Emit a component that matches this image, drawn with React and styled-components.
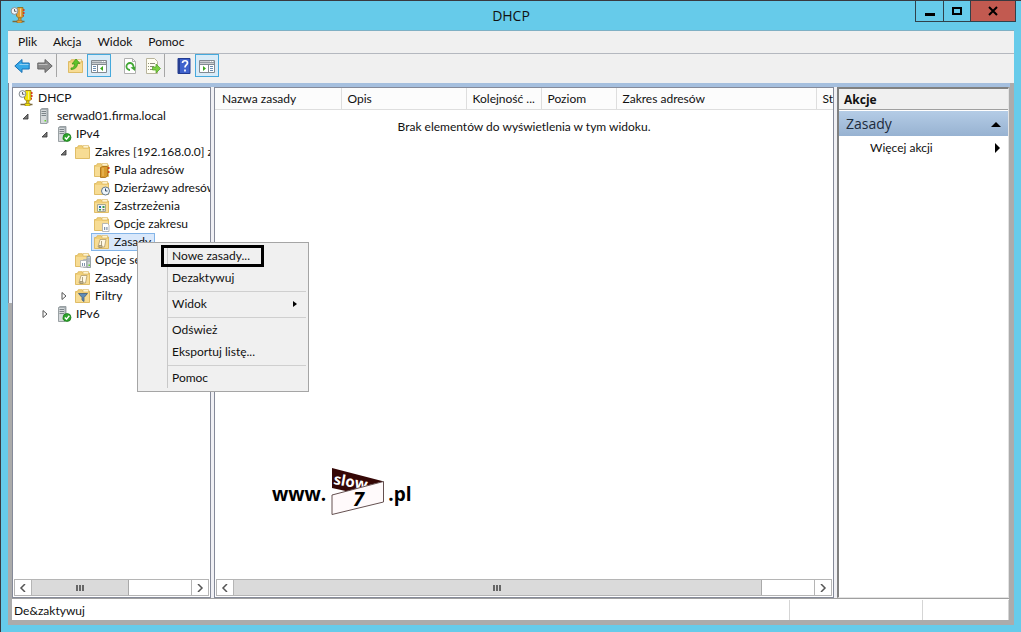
import React from 'react'
import styled, { createGlobalStyle, css } from 'styled-components'

const GlobalStyle = createGlobalStyle`
  * {
    box-sizing: border-box;
  }

  body {
    margin: 0;
    font-family: Lato, "Open Sans", sans-serif;
    font-size: 12px;
    line-height: 18px;
    color: #111;
  }

  button {
    margin: 0;
    padding: 0;
    border: 0;
    background: none;
    font: inherit;
    color: inherit;
    text-align: left;
  }

  svg {
    display: block;
    flex: none;
  }
`

const Window = styled.div`
  display: flex;
  flex-direction: column;
  height: 100vh;
  padding: 0 7px 7px;
  background: #66cbea;
  border: 1px solid #39393f;
  border-width: 1px 0 0 1px;
`

const TitleBar = styled.header`
  display: grid;
  grid-template-columns: 1fr auto 1fr;
  height: 29px;
  flex: none;
`

const TitleIcon = styled.div`
  padding: 6px 2px;
`

const Title = styled.h1`
  margin: 0;
  font-family: "Open Sans", sans-serif;
  font-size: 14px;
  font-weight: 400;
  line-height: 30px;
`

const WindowButtons = styled.div`
  display: flex;
  justify-self: end;
  margin-right: -2px;
  height: 21px;
  border: 1px solid #30414a;
  border-top: 0;
`

const WindowButton = styled.button`
  display: grid;
  place-items: center;
  width: ${({ $wide }) => ($wide ? 45 : 27)}px;
  background: ${({ $danger }) => ($danger ? '#c25a50' : 'transparent')};

  & + & {
    border-left: 1px solid #30414a;
  }
`

const Client = styled.div`
  display: flex;
  flex-direction: column;
  flex: 1;
  min-height: 0;
  background: #f0f0f0;
  border-top: 1px solid #7fb0c4;
`

const MenuBar = styled.nav`
  display: flex;
  height: 23px;
  flex: none;
  padding-left: 2px;
  border-bottom: 1px solid #b4b8bf;
`

const MenuBarItem = styled.button`
  padding: 0 8px;
`

const Toolbar = styled.div`
  display: flex;
  align-items: center;
  height: 29px;
  flex: none;
  padding: 0 2px 6px;
`

const ToolGroup = styled.div`
  display: flex;
  margin-right: 7px;
  border-right: ${({ $divided }) => ($divided ? '1px solid #a6a6a6' : '0')};
`

const ToolButton = styled.button`
  display: grid;
  place-items: center;
  width: ${({ $pressed }) => ($pressed ? 24 : 23)}px;
  height: 23px;
  ${({ $pressed }) => $pressed && css`
    background: #d8ebf8;
    border: 1px solid #45a9dc;
  `}
`

const Body = styled.div`
  display: flex;
  flex-direction: column;
  flex: 1;
  min-height: 0;
  padding: 4px 5px 5px 4px;
  background:
    linear-gradient(90deg, #7d8494 0 1px, #eef3fb 1px 4px) 0 0 / 4px 220px no-repeat,
    linear-gradient(#a5bfde, #a5bfde) 0 0 / calc(100% - 4px) 4px no-repeat,
    #ababab;
`

const Panes = styled.div`
  display: flex;
  flex: 1;
  min-height: 0;
  gap: 3px;
  background: #f0f0f4;
`

const Pane = styled.section`
  display: flex;
  flex-direction: column;
  min-width: 0;
  overflow: hidden;
  background: #fff;
  border: 1px solid #858a99;
`

const TreePane = styled(Pane)`
  width: 199px;
  flex: none;
`

const ListPane = styled(Pane)`
  flex: 1;
`

const ActionsPane = styled(Pane)`
  width: 172px;
  flex: none;
  border: 2px solid #808080;
  border-right: 1px solid #e3e3e3;
  border-bottom: 1px solid #e3e3e3;
`

const Tree = styled.ul`
  flex: 1;
  margin: 0;
  padding: 1px 0 0;
  list-style: none;
  overflow: hidden;
`

const TreeRow = styled.li`
  display: flex;
  align-items: center;
  height: 18px;
  padding-left: ${({ $level }) => ($level ? $level * 19 - 12 : 2)}px;
  white-space: nowrap;
`

const Expander = styled.span`
  display: grid;
  place-items: center;
  flex: none;
  width: 10px;
  height: 18px;
  margin-right: 4px;
`

const TreeLabel = styled.button`
  display: flex;
  align-items: center;
  flex: none;
  gap: 4px;
  height: 18px;
  padding: 0 3px 0 2px;
  line-height: 16px;
  border: 1px solid ${({ $selected }) => ($selected ? '#84b5e8' : 'transparent')};
  background: ${({ $selected }) => ($selected ? '#d9e8fb' : 'none')};
`

const ScrollBar = styled.div`
  display: flex;
  flex: none;
  height: 17px;
  margin: 0 1px 1px;
  border: 1px solid #b5b5b5;
`

const ScrollArrow = styled.button`
  display: grid;
  place-items: center;
  width: 16px;
`

const ScrollTrack = styled.div`
  flex: 1;
  border: 1px solid #b5b5b5;
  border-width: 0 1px;
`

const ScrollThumb = styled.div`
  display: grid;
  place-items: center;
  width: ${({ $size }) => $size}%;
  height: 15px;
  background: #dadada;
  border-right: 1px solid #a9a9a9;
`

const ListTable = styled.table`
  width: 100%;
  table-layout: fixed;
  border-collapse: collapse;
`

const ColumnHead = styled.th`
  width: ${({ $width }) => ($width ? `${$width}px` : 'auto')};
  height: 21px;
  padding: 1px 0 0 6px;
  overflow: hidden;
  font-weight: 400;
  text-align: left;
  white-space: nowrap;
  background: #fcfcfc;
  border: 1px solid #dedede;
  border-width: 0 1px 1px 0;

  &:first-child {
    padding-left: 7px;
  }

  &:last-child {
    border-right: 0;
  }
`

const EmptyCell = styled.td`
  padding: 8px 0 0;
  text-align: center;
`

const ListArea = styled.div`
  display: flex;
  flex-direction: column;
  justify-content: space-between;
  flex: 1;
  min-height: 0;
`

const Watermark = styled.div`
  display: flex;
  align-items: flex-end;
  gap: 4px;
  padding: 0 0 62px 57px;
  font-family: "Open Sans", sans-serif;
  font-size: 19px;
  font-weight: 700;
  line-height: 46px;
  color: #000;
`

const ActionsTitle = styled.h2`
  margin: 0 0 1px;
  padding: 1px 5px 0;
  font-family: "Open Sans", sans-serif;
  font-size: 12px;
  line-height: 19px;
  background: #f0f0f0;
  border-bottom: 1px solid #a0a0a0;
`

const ActionsGroup = styled.button`
  display: flex;
  align-items: center;
  justify-content: space-between;
  height: 25px;
  padding: 0 7px;
  font-family: "Open Sans", sans-serif;
  font-size: 14px;
  color: #1c2b3c;
  background: linear-gradient(#b4cce6, #97b2d1);
`

const ActionsItem = styled.button`
  display: flex;
  align-items: center;
  justify-content: space-between;
  height: 24px;
  padding: 0 6px 0 31px;
`

const StatusBar = styled.footer`
  display: flex;
  flex: none;
  height: 22px;
  background: #fff;
  border-top: 1px solid #a0a0a0;
`

const StatusText = styled.div`
  flex: 1;
  padding: 3px 2px 0;
`

const StatusCell = styled.div`
  width: ${({ $width }) => $width}px;
  margin-top: 1px;
  border-left: 1px solid #d5d5d5;

  &:last-child {
    border-right: 1px solid #d5d5d5;
  }
`

const ContextMenu = styled.div`
  position: absolute;
  top: 242px;
  left: 137px;
  width: 172px;
  padding: 2px;
  background: linear-gradient(#c8c8c8, #c8c8c8) 29px 3px / 1px calc(100% - 6px) no-repeat, #f0f0f0;
  border: 1px solid #a5a5a5;
`

const ContextItem = styled.button`
  display: flex;
  align-items: center;
  justify-content: space-between;
  width: 100%;
  height: 22px;
  padding: 0 7px 0 32px;
`

const ContextRule = styled.hr`
  height: 1px;
  margin: 2px 0 1px 28px;
  border: 0;
  background: #cfcfcf;
`

const Highlight = styled.div`
  position: absolute;
  top: 2px;
  left: 23px;
  width: 103px;
  height: 22px;
  border: 3px solid #000;
  pointer-events: none;
`

const Icon = ({ size = 16, children }) => (
  <svg width={size} height={size} viewBox={`0 0 ${size} ${size}`} aria-hidden="true">
    {children}
  </svg>
)

const DhcpIcon = ({ color = '#f2e205' }) => (
  <Icon>
    <path d="M6.500 1.500 8 .5h5v9l-1.500 1.500h-3l-2-2z" fill={color} stroke="#8a6b14" strokeWidth=".8" />
    <path d="M10.500 1.500v8" stroke="#fff" opacity=".5" />
    <path d="M13 2h1.500v2H13zM13 5h1.500v2H13zM13 8h1v1.500h-1z" fill="#d9391e" />
    <path d="M8.500 11h2.500v3H8.500z" fill={color} stroke="#8a6b14" strokeWidth=".6" />
    <path d="M2.500 14.500h12" stroke="#7d6a3a" strokeWidth="1.500" />
    <path d="M7 13.300h5V16H7z" fill={color} stroke="#7d6a3a" strokeWidth=".6" />
    <circle cx="4.500" cy="4" r="3.400" fill="#f2f5f8" stroke="#858b90" />
    <path d="M4.500 2v2.300h2" fill="none" stroke="#444" strokeWidth=".8" />
  </Icon>
)

const ServerShape = ({ x = 3 }) => (
  <g transform={`translate(${x} 0)`}>
    <path d="M.5 1.500 2 .5h6v14l-1 1H.5z" fill="#a4acb0" stroke="#8b9397" strokeWidth=".8" />
    <path d="M1 2h5.500v13H1z" fill="#d5d9db" />
    <path d="M1.500 3.500h4.500M1.500 5.500h4.500M1.500 7.500h4.500" stroke="#7b8489" />
    <path d="M4.500 12h1.500v1.500H4.500z" fill="#63d52c" />
  </g>
)

const FolderShape = () => (
  <>
    <path d="M.5 14.500v-11h1.800l1-1.800h4l1 1.300h6.200v11.500z" fill="#f0cf78" stroke="#d9b252" strokeWidth=".8" />
    <path d="M8 1.500h5.500V4H8z" fill="#fff4cf" stroke="#d9b45c" strokeWidth=".6" />
    <path d="M1 5h13v9H1z" fill="#f7dc94" />
  </>
)

const TreeIcon = ({ kind }) => {
  if (kind === 'dhcp') return <DhcpIcon />
  if (kind === 'server') return <Icon><ServerShape /></Icon>
  if (kind === 'online') {
    return (
      <Icon>
        <ServerShape x={2} />
        <circle cx="11" cy="11.500" r="4" fill="#2da52b" stroke="#147216" strokeWidth=".7" />
        <path d="m8.800 11.500 1.700 1.800 2.800-3.500" fill="none" stroke="#fff" strokeWidth="1.400" />
      </Icon>
    )
  }
  return (
    <Icon>
      <FolderShape />
      {kind === 'pool' && (
        <>
          <path d="m6.500 5.500 2-1h5v9.500l-2 1.500h-5z" fill="#d99a2e" stroke="#a5690f" strokeWidth=".8" />
          <path d="M9 6v8" stroke="#f0c56a" />
          <path d="M14 5h1.500v2H14zM14 9h1.500v2H14z" fill="#cf3e1d" />
        </>
      )}
      {kind === 'lease' && (
        <>
          <circle cx="11.500" cy="11" r="4" fill="#eef5fb" stroke="#63788a" />
          <path d="M11.500 8.500V11h2" fill="none" stroke="#304a62" />
        </>
      )}
      {kind === 'reserved' && (
        <>
          <path d="M3.500 6.500h8v7h-8z" fill="#eef1ef" stroke="#aaa88c" />
          <path d="M5 8h2v2H5z" fill="#2a6cb8" />
          <path d="M8.500 8h2v2h-2zM5 11h2v1.500H5z" fill="#3a9b43" />
          <path d="M8.500 11h2v1.500h-2z" fill="#777" />
        </>
      )}
      {(kind === 'options' || kind === 'serverOptions') && (
        <>
          <path d="M8.500 7.500h5l1.500 1.500v6.500H8.500z" fill="#fff" stroke="#a6a9ae" strokeWidth=".8" />
          <path d="M10 11h1.200v3H10zM12.300 11h1.200v3h-1.200z" fill="#8093ab" />
        </>
      )}
      {kind === 'serverOptions' && (
        <>
          <path d="M5.500 8.500h6v6.500h-6z" fill="#fff" stroke="#a6a9ae" strokeWidth=".8" />
          <path d="M7 11h1v3H7zM9 11h1v3H9z" fill="#8093ab" />
          <path d="M12 4.500h3.500v11H12zM12.500 7h2.500M12.500 9h2.500" fill="#cdd3d6" stroke="#8b979b" strokeWidth=".8" />
          <path d="M13.500 12.500h1.500V14h-1.500z" fill="#63d52c" />
        </>
      )}
      {kind === 'policy' && (
        <>
          <path d="M6 5.500h6l-1.500 7.500H4z" fill="#fff8e3" stroke="#b09b6b" strokeWidth=".8" />
          <path d="M7.500 7v4.500M5 11.500h3v2H5z" fill="#c8b98e" stroke="#9b8d6b" strokeWidth=".8" />
        </>
      )}
      {kind === 'filter' && (
        <path d="M3.500 5.500h9L9 9.500v4l-2-1.500V9.500z" fill="#5f8cb8" stroke="#405e7c" strokeWidth=".8" />
      )}
    </Icon>
  )
}

const OpenArrow = () => (
  <Icon size={8}><path d="M7 2v5H2z" fill="#777" stroke="#333" strokeWidth=".8" /></Icon>
)

const ClosedArrow = () => (
  <Icon size={8}><path d="M3 .5v7L7 4z" fill="#fff" stroke="#555" /></Icon>
)

const ArrowIcon = ({ flip, color, edge }) => (
  <Icon>
    <path
      d="M.8 8 8 1.500V5h7.200v6H8v3.500z"
      fill={color}
      stroke={edge}
      transform={flip ? 'translate(16 0) scale(-1 1)' : undefined}
    />
    <path d={flip ? 'M1.500 6.500h9' : 'M5.500 6.500h9'} stroke="#fff" opacity=".45" />
  </Icon>
)

const UpFolderIcon = () => (
  <Icon>
    <FolderShape />
    <path d="M3 10c2.500 0 3.500-1.500 3.500-4H4L8 1l4 4.500H9.500C9.500 9 7 11.500 3 11.500z" fill="#5fc32a" stroke="#399014" strokeWidth=".7" />
  </Icon>
)

const PanelIcon = ({ right }) => (
  <Icon>
    <path d="M.5 2.500h15v12H.5z" fill="#fff" stroke="#828a91" />
    <path d="M1 4.500h14" stroke="#969da3" strokeWidth="2" />
    <path d="M1 6.500h14" stroke="#828a91" />
    <path d="M11 3.500h1M13 3.500h1" stroke="#fff" />
    <path d={right ? 'M9.500 7v7.500' : 'M6.500 7v7.500'} stroke="#828a91" />
    <path d={right ? 'M11 8.500h3M11 10.500h3M11 12.500h3' : 'M2 8.500h3M2 10.500h3M2 12.500h3'} stroke="#6b8eb2" />
    <path d={right ? 'm4 8 3 2.500L4 13z' : 'm12 8-3 2.500 3 2.500z'} fill="#3ca71e" />
  </Icon>
)

const RefreshIcon = () => (
  <Icon>
    <path d="M2.500.5h8l3 3v12h-11z" fill="#fff" stroke="#b0b0b0" />
    <path d="M10.500.5v3h3" fill="none" stroke="#b0b0b0" />
    <path d="M8 12a3.500 3.500 0 1 1 3.400-3" fill="none" stroke="#42a735" strokeWidth="1.800" />
    <path d="m8.500 9.500 5-1-.5 4.500z" fill="#42a735" />
  </Icon>
)

const ExportIcon = () => (
  <Icon>
    <path d="M1.500.5h8l3 3v12h-11z" fill="#fffef2" stroke="#b8b49c" />
    <path d="M3 5.500h1M5 5.500h5M3 8.500h1M5 8.500h4M3 11.500h1M5 11.500h5" stroke="#8d8d78" />
    <path d="M7.500 9H11V6l4.500 4.500L11 15v-3H7.500z" fill="#7bd141" stroke="#4e9f22" strokeWidth=".7" />
  </Icon>
)

const HelpIcon = () => (
  <Icon>
    <path d="M2 .5h12v15H2z" fill="#3f62cd" stroke="#223b91" />
    <path d="M3 1v14" stroke="#263e91" strokeWidth="2" />
    <path d="M6.500 5c.2-3 5-3 5 0 0 2-2.500 2-2.500 4.500M9 11.500v2" fill="none" stroke="#fff" strokeWidth="1.700" />
  </Icon>
)

const Logo = () => (
  <svg width="54" height="50" viewBox="-1 0 54 50" aria-hidden="true">
    <path d="M1 1 53 14.500 30 20 17 24.500 1 21z" fill="#350706" />
    <text x="2" y="17" transform="rotate(10 2 17)" fill="#fff" fontSize="15" fontWeight="700">slow</text>
    <path d="M1 28 52.500 14.500V35L1 47.500z" fill="#fffafb" stroke="#645050" />
    <text x="22" y="39" fontSize="20" fontWeight="700" fontStyle="italic">7</text>
  </svg>
)

const treeRows = [
  { label: 'DHCP', level: 0, icon: 'dhcp' },
  { label: 'serwad01.firma.local', level: 1, icon: 'server', open: true },
  { label: 'IPv4', level: 2, icon: 'online', open: true },
  { label: 'Zakres [192.168.0.0] za', level: 3, icon: 'folder', open: true },
  { label: 'Pula adresów', level: 4, icon: 'pool' },
  { label: 'Dzierżawy adresów', level: 4, icon: 'lease' },
  { label: 'Zastrzeżenia', level: 4, icon: 'reserved' },
  { label: 'Opcje zakresu', level: 4, icon: 'options' },
  { label: 'Zasady', level: 4, icon: 'policy', selected: true },
  { label: 'Opcje serwera', level: 3, icon: 'serverOptions' },
  { label: 'Zasady', level: 3, icon: 'policy' },
  { label: 'Filtry', level: 3, icon: 'filter', open: false },
  { label: 'IPv6', level: 2, icon: 'online', open: false },
]

const columns = [
  { label: 'Nazwa zasady', width: 126 },
  { label: 'Opis', width: 125 },
  { label: 'Kolejność ...', width: 75 },
  { label: 'Poziom', width: 75 },
  { label: 'Zakres adresów', width: 200 },
  { label: 'St' },
]

const Scroll = ({ size }) => (
  <ScrollBar>
    <ScrollArrow aria-label="W lewo">
      <Icon size={8}><path d="M6 0 2 4l4 4" fill="none" stroke="#555" strokeWidth="1.500" /></Icon>
    </ScrollArrow>
    <ScrollTrack>
      <ScrollThumb $size={size}>
        <Icon size={8}><path d="M1 1v6M4 1v6M7 1v6" stroke="#666" strokeWidth="2" /></Icon>
      </ScrollThumb>
    </ScrollTrack>
    <ScrollArrow aria-label="W prawo">
      <Icon size={8}><path d="m2 0 4 4-4 4" fill="none" stroke="#555" strokeWidth="1.500" /></Icon>
    </ScrollArrow>
  </ScrollBar>
)

const App = () => (
  <>
    <GlobalStyle />
    <Window>
      <TitleBar>
        <TitleIcon><DhcpIcon color="#e3a037" /></TitleIcon>
        <Title>DHCP</Title>
        <WindowButtons>
          <WindowButton aria-label="Minimalizuj">
            <Icon size={10}><path d="M0 7h10v3H0z" /></Icon>
          </WindowButton>
          <WindowButton aria-label="Maksymalizuj">
            <Icon size={10}><path d="M1 2h8v6H1z" fill="none" stroke="#000" strokeWidth="2" /></Icon>
          </WindowButton>
          <WindowButton $wide $danger aria-label="Zamknij">
            <Icon size={10}><path d="m1 1 8 8M9 1 1 9" stroke="#000" strokeWidth="2" /></Icon>
          </WindowButton>
        </WindowButtons>
      </TitleBar>
      <Client>
        <MenuBar>
          {['Plik', 'Akcja', 'Widok', 'Pomoc'].map(item => (
            <MenuBarItem key={item}>{item}</MenuBarItem>
          ))}
        </MenuBar>
        <Toolbar>
          <ToolGroup $divided>
            <ToolButton aria-label="Wstecz"><ArrowIcon color="#37a9e8" edge="#1770b5" /></ToolButton>
            <ToolButton aria-label="Dalej"><ArrowIcon flip color="#8b8b8b" edge="#646464" /></ToolButton>
          </ToolGroup>
          <ToolGroup>
            <ToolButton aria-label="W górę"><UpFolderIcon /></ToolButton>
            <ToolButton $pressed aria-label="Drzewo konsoli"><PanelIcon /></ToolButton>
          </ToolGroup>
          <ToolGroup $divided>
            <ToolButton aria-label="Odśwież"><RefreshIcon /></ToolButton>
            <ToolButton aria-label="Eksportuj listę"><ExportIcon /></ToolButton>
          </ToolGroup>
          <ToolGroup>
            <ToolButton aria-label="Pomoc"><HelpIcon /></ToolButton>
            <ToolButton $pressed aria-label="Okienko akcji"><PanelIcon right /></ToolButton>
          </ToolGroup>
        </Toolbar>
        <Body>
          <Panes>
            <TreePane>
              <Tree>
                {treeRows.map((row, i) => (
                  <TreeRow key={i} $level={row.level}>
                    {row.level > 0 && (
                      <Expander>
                        {row.open === true && <OpenArrow />}
                        {row.open === false && <ClosedArrow />}
                      </Expander>
                    )}
                    <TreeLabel $selected={row.selected}>
                      <TreeIcon kind={row.icon} />
                      {row.label}
                    </TreeLabel>
                  </TreeRow>
                ))}
              </Tree>
              <Scroll size={61} />
            </TreePane>
            <ListPane>
              <ListArea>
                <ListTable>
                  <thead>
                    <tr>
                      {columns.map(column => (
                        <ColumnHead key={column.label} $width={column.width}>{column.label}</ColumnHead>
                      ))}
                    </tr>
                  </thead>
                  <tbody>
                    <tr>
                      <EmptyCell colSpan={6}>Brak elementów do wyświetlenia w tym widoku.</EmptyCell>
                    </tr>
                  </tbody>
                </ListTable>
                <Watermark>www.<Logo />.pl</Watermark>
              </ListArea>
              <Scroll size={91} />
            </ListPane>
            <ActionsPane>
              <ActionsTitle>Akcje</ActionsTitle>
              <ActionsGroup>
                Zasady
                <Icon size={10}><path d="M0 8h10L5 3z" /></Icon>
              </ActionsGroup>
              <ActionsItem>
                Więcej akcji
                <Icon size={10}><path d="M3 0v10l5-5z" /></Icon>
              </ActionsItem>
            </ActionsPane>
          </Panes>
          <StatusBar>
            <StatusText>De&amp;zaktywuj</StatusText>
            <StatusCell $width={133} />
            <StatusCell $width={87} />
          </StatusBar>
        </Body>
      </Client>
    </Window>
    <ContextMenu>
      <ContextItem>Nowe zasady...</ContextItem>
      <ContextItem>Dezaktywuj</ContextItem>
      <ContextRule />
      <ContextItem>
        Widok
        <Icon size={8}><path d="M2 1v6l4-3z" /></Icon>
      </ContextItem>
      <ContextRule />
      <ContextItem>Odśwież</ContextItem>
      <ContextItem>Eksportuj listę...</ContextItem>
      <ContextRule />
      <ContextItem>Pomoc</ContextItem>
      <Highlight />
    </ContextMenu>
  </>
)

export default App
